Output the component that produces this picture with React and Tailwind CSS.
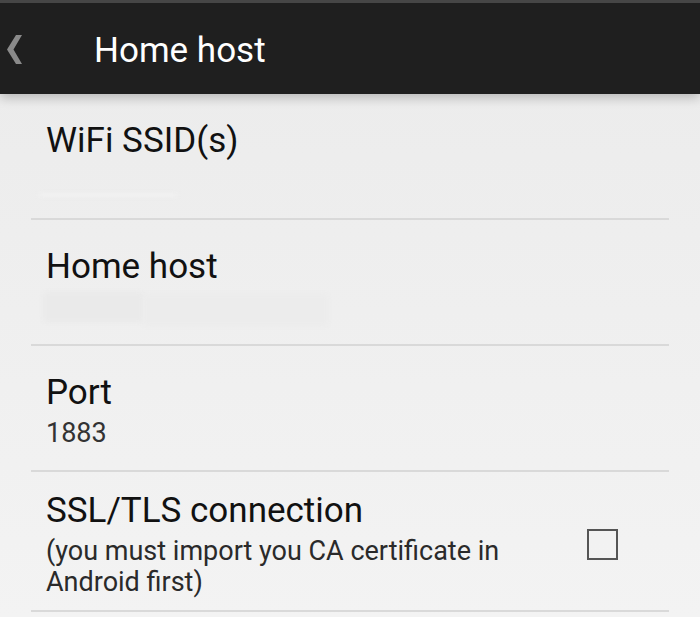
import React from 'react'

function BackChevron() {
  return (
    <svg width="16" height="30" viewBox="0 0 16 30" className="shrink-0">
      <polygon points="15,0 9,0 0,14.5 9,29 15,29 6.5,14.5" fill="#8a8a8a" />
    </svg>
  )
}

function Divider() {
  return <div className="h-[2px] bg-[#d9d9d9]" />
}

function Redacted({ className }) {
  return <div className={`rounded-sm blur-[2px] ${className}`} />
}

export default function App() {
  return (
    <div
      className="w-[700px] h-[617px] overflow-hidden bg-gradient-to-b from-[#ebebeb] to-[#f3f3f3] text-[#111]"
      style={{ fontFamily: 'Roboto, "Noto Sans", sans-serif' }}
    >
      {/* action bar */}
      <div className="relative z-10 h-[94px] border-t-[3px] border-[#464646] bg-[#1f1f1f] flex items-center pt-[3px] shadow-[0_4px_10px_rgba(0,0,0,0.22)]">
        <div className="pl-[7px]">
          <BackChevron />
        </div>
        <h1 className="ml-[71px] text-[35px] leading-[41px] text-white">Home host</h1>
      </div>

      {/* preference list */}
      <div className="mx-[31px]">
        <div className="pl-[15px] pt-[26px] pb-[21px]">
          <div className="text-[35px] leading-[41px]">WiFi SSID(s)</div>
          <div className="mt-[5px] h-[31px] flex items-end">
            <Redacted className="h-[4px] w-[140px] -ml-[8px] bg-[#f1f1f1]" />
          </div>
        </div>
        <Divider />

        <div className="pl-[15px] pt-[26px] pb-[21px]">
          <div className="text-[35px] leading-[41px]">Home host</div>
          <div className="mt-[5px] h-[31px] flex items-start">
            <Redacted className="h-[30px] w-[100px] -ml-[3px] bg-[#eaeaea]" />
            <Redacted className="h-[32px] w-[185px] mt-[2px] bg-[#ececec]" />
          </div>
        </div>
        <Divider />

        <div className="pl-[15px] pt-[26px] pb-[21px]">
          <div className="text-[35px] leading-[41px]">Port</div>
          <div className="mt-[5px] text-[27px] leading-[31px] text-[#333]">1883</div>
        </div>
        <Divider />

        <div className="pl-[15px] pr-[51px] pt-[18px] pb-[12px] flex items-center">
          <div className="flex-1">
            <div className="text-[35px] leading-[41px]">SSL/TLS connection</div>
            <div className="mt-[5px] text-[27px] leading-[31px] text-[#2a2a2a] max-w-[500px]">
              (you must import you CA certificate in Android first)
            </div>
          </div>
          <div className="w-[31px] h-[31px] border-2 border-[#555] shrink-0" />
        </div>
        <Divider />
      </div>
    </div>
  )
}
